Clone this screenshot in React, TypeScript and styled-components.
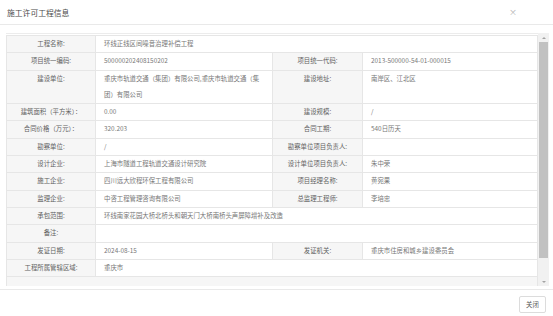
import React from "react";
import styled, { createGlobalStyle } from "styled-components";

const GlobalStyle = createGlobalStyle`
  html, body {
    margin: 0;
    padding: 0;
    background: #fff;
    font-family: "Noto Sans CJK SC", "Noto Sans", sans-serif;
  }
`;

const Dialog = styled.div`
  width: 553px;
  height: 316px;
  background: #fff;
  display: flex;
  flex-direction: column;
  overflow: hidden;
`;

const Header = styled.div`
  height: 24px;
  border-bottom: 1px solid #e9e9e9;
  display: flex;
  align-items: center;
  justify-content: space-between;
  padding: 0 36px 0 7px;
`;

const Title = styled.div`
  font-size: 7.8px;
  color: #4a4a4a;
`;

const Close = styled.span`
  font-size: 8px;
  color: #b0b0b0;
  line-height: 1;
`;

const Body = styled.div`
  margin: 8px 4px 0 6px;
  height: 253px;
  display: flex;
`;

const Viewport = styled.div`
  flex: 1;
  overflow: hidden;
  border-top: 1px solid #ececec;
`;

const ScrollBar = styled.div`
  width: 11px;
  background: #f1f1f1;
  display: flex;
  flex-direction: column;
  align-items: center;
`;

const Arrow = styled.div<{ $down?: boolean }>`
  height: 9px;
  width: 100%;
  display: flex;
  align-items: center;
  justify-content: center;
  &::before {
    content: "";
    border-left: 2.5px solid transparent;
    border-right: 2.5px solid transparent;
    ${(p) =>
      p.$down
        ? "border-top: 2.5px solid #a3a3a3;"
        : "border-bottom: 2.5px solid #a3a3a3;"}
  }
`;

const Track = styled.div`
  flex: 1;
  width: 100%;
  display: flex;
  justify-content: center;
`;

const Thumb = styled.div`
  width: 9px;
  height: 216px;
  background: #c1c1c1;
`;

const Table = styled.table`
  width: 531px;
  margin-top: 1px;
  table-layout: fixed;
  border-collapse: collapse;
  font-size: 6.4px;
  border: 1px solid #e6e6e6;
`;

const Label = styled.td`
  background: #f6f6f6;
  color: #616161;
  text-align: center;
  vertical-align: top;
  border: 1px solid #e6e6e6;
  line-height: 16.3px;
  padding: 0 2px;
  white-space: nowrap;
`;

const Value = styled.td`
  background: #fff;
  color: #777;
  vertical-align: top;
  border: 1px solid #e6e6e6;
  line-height: 16.3px;
  padding: 0 8px;
  word-break: break-all;
`;

const Filler = styled.td`
  background: #f6f6f6;
  height: 17px;
  border: 1px solid #e6e6e6;
`;

const Footer = styled.div`
  margin-top: 3px;
  border-top: 1px solid #e9e9e9;
  display: flex;
  justify-content: flex-end;
  padding: 6px 7px 0 0;
`;

const Button = styled.button`
  font-family: inherit;
  font-size: 6.4px;
  color: #555;
  background: #fff;
  border: 1px solid #dcdcdc;
  border-radius: 2px;
  width: 27px;
  height: 17px;
  padding: 0;
`;

type Pair = [string, string];

const rows: Array<Pair[]> = [
  [["工程名称:", "环线正线区间噪音治理补偿工程"]],
  [
    ["项目统一编码:", "500000202408150202"],
    ["项目统一代码:", "2013-500000-54-01-000015"],
  ],
  [
    ["建设单位:", "重庆市轨道交通（集团）有限公司,重庆市轨道交通（集团）有限公司"],
    ["建设地址:", "南岸区、江北区"],
  ],
  [
    ["建筑面积（平方米）：", "0.00"],
    ["建设规模:", "/"],
  ],
  [
    ["合同价格（万元）：", "320.203"],
    ["合同工期:", "540日历天"],
  ],
  [
    ["勘察单位:", "/"],
    ["勘察单位项目负责人:", ""],
  ],
  [
    ["设计企业:", "上海市隧道工程轨道交通设计研究院"],
    ["设计单位项目负责人:", "朱中荣"],
  ],
  [
    ["施工企业:", "四川远大欣程环保工程有限公司"],
    ["项目经理名称:", "黄宛果"],
  ],
  [
    ["监理企业:", "中咨工程管理咨询有限公司"],
    ["总监理工程师:", "李培忠"],
  ],
  [["承包范围:", "环线南家花园大桥北桥头和朝天门大桥南桥头声屏障增补及改造"]],
  [["备注:", ""]],
  [
    ["发证日期:", "2024-08-15"],
    ["发证机关:", "重庆市住房和城乡建设委员会"],
  ],
  [["工程所属管辖区域:", "重庆市"]],
];

export default function App() {
  return (
    <Dialog>
      <GlobalStyle />
      <Header>
        <Title>施工许可工程信息</Title>
        <Close>×</Close>
      </Header>
      <Body>
        <Viewport>
          <Table>
            <colgroup>
              <col style={{ width: 89 }} />
              <col style={{ width: 177 }} />
              <col style={{ width: 90 }} />
              <col style={{ width: 175 }} />
            </colgroup>
            <tbody>
              {rows.map((row, i) => (
                <tr key={i}>
                  {row.map(([label, value], j) => (
                    <React.Fragment key={j}>
                      <Label>{label}</Label>
                      <Value colSpan={row.length === 1 ? 3 : 1}>{value}</Value>
                    </React.Fragment>
                  ))}
                </tr>
              ))}
              <tr>
                <Filler colSpan={4} />
              </tr>
              <tr>
                <Filler colSpan={4} />
              </tr>
            </tbody>
          </Table>
        </Viewport>
        <ScrollBar>
          <Arrow />
          <Track>
            <Thumb />
          </Track>
          <Arrow $down />
        </ScrollBar>
      </Body>
      <Footer>
        <Button>关闭</Button>
      </Footer>
    </Dialog>
  );
}
